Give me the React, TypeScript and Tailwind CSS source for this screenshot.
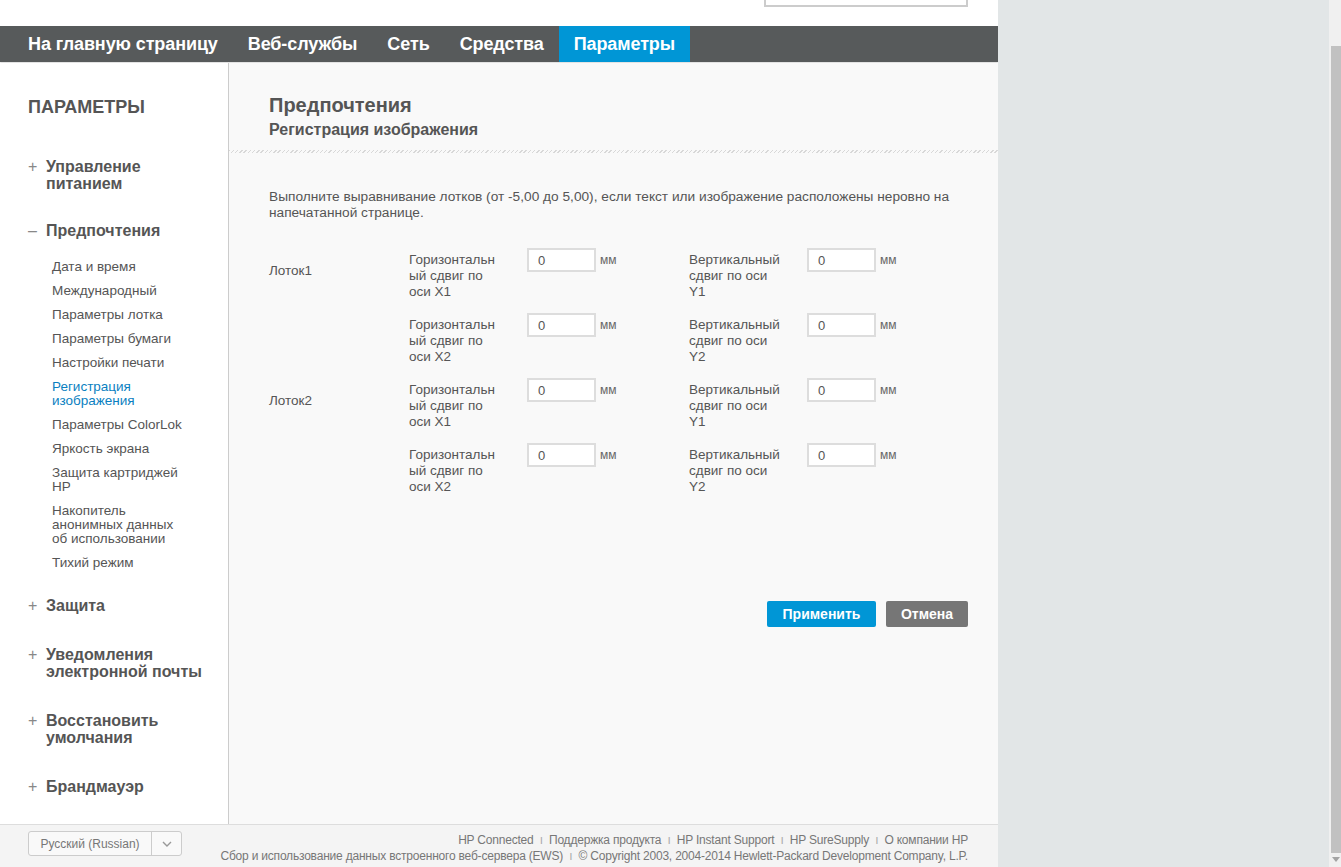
import React from 'react';

const NAV = ['На главную страницу', 'Веб-службы', 'Сеть', 'Средства', 'Параметры'];

const SUB_ITEMS = [
  'Дата и время',
  'Международный',
  'Параметры лотка',
  'Параметры бумаги',
  'Настройки печати',
  'Регистрация изображения',
  'Параметры ColorLok',
  'Яркость экрана',
  'Защита картриджей HP',
  'Накопитель анонимных данных об использовании',
  'Тихий режим',
];

const SECTIONS_AFTER = ['Защита', 'Уведомления электронной почты', 'Восстановить умолчания', 'Брандмауэр'];

interface OffsetRow {
  tray?: string;
  x: string;
  y: string;
}

const ROWS: OffsetRow[] = [
  { tray: 'Лоток1', x: 'X1', y: 'Y1' },
  { x: 'X2', y: 'Y2' },
  { tray: 'Лоток2', x: 'X1', y: 'Y1' },
  { x: 'X2', y: 'Y2' },
];

const SectionHead: React.FC<{ sign: string; title: string }> = ({ sign, title }) => (
  <div className="flex text-[16px] font-bold leading-[16.5px] text-[#555]">
    <span className="w-[18px] shrink-0 font-normal text-[#888]">{sign}</span>
    <span className="w-[160px]">{title}</span>
  </div>
);

const OffsetInput: React.FC = () => (
  <div className="flex items-start">
    <input
      defaultValue="0"
      className="h-[24px] w-[69px] border-2 border-[#ddd] bg-white px-[9px] text-[13px] text-[#555] outline-none"
    />
    <span className="ml-[4px] pt-[4px] text-[12px] text-[#666]">мм</span>
  </div>
);

export default function App() {
  return (
    <div className="flex h-[867px] w-[1341px] overflow-hidden font-['Liberation_Sans',Arial,sans-serif]">
      <div className="flex w-[998px] flex-col">
        {/* header strip with search box */}
        <div className="relative h-[26px] bg-white">
          <div className="absolute left-[764px] top-[-20px] h-[27px] w-[204px] border-2 border-[#ccc] bg-white" />
        </div>

        <nav className="flex h-[36px] bg-[#575a5b] pl-[13px] shadow-[0_2px_2px_rgba(0,0,0,0.12)]">
          {NAV.map((item) => (
            <div
              key={item}
              className={`flex items-center px-[15px] text-[18px] font-bold tracking-[-0.1px] text-white ${
                item === 'Параметры' ? 'bg-[#0096d6]' : ''
              }`}
            >
              {item}
            </div>
          ))}
        </nav>

        <div className="flex flex-1 pt-[1px]">
          {/* left menu */}
          <aside className="w-[229px] shrink-0 border-r border-[#ccc] bg-white pl-[28px] pt-[31px]">
            <div className="mb-[38px] text-[18px] font-bold text-[#555]">ПАРАМЕТРЫ</div>
            <SectionHead sign="+" title="Управление питанием" />
            <div className="mt-[31px]">
              <SectionHead sign="–" title="Предпочтения" />
            </div>
            <ul className="mt-[15px] pl-[24px] text-[13.5px] leading-[14px] text-[#555]">
              {SUB_ITEMS.map((s) => (
                <li
                  key={s}
                  className={`w-[132px] py-[5px] ${s === 'Регистрация изображения' ? 'text-[#0a7fc1]' : ''}`}
                >
                  {s}
                </li>
              ))}
            </ul>
            {SECTIONS_AFTER.map((s, i) => (
              <div key={s} className={i === 0 ? 'mt-[23px]' : 'mt-[33px]'}>
                <SectionHead sign="+" title={s} />
              </div>
            ))}
          </aside>

          {/* main panel */}
          <main className="flex-1 bg-[#f9f9f9]">
            <div className="px-[40px] pt-[30px]">
              <h1 className="text-[20px] font-bold leading-[24px] text-[#555]">Предпочтения</h1>
              <h2 className="mt-[4px] text-[16px] font-bold leading-[18px] text-[#555]">Регистрация изображения</h2>
            </div>
            <div className="mt-[11px] h-[3px] bg-[repeating-linear-gradient(135deg,#d8d8d8_0_1px,transparent_1px_3px)]" />

            <div className="pl-[40px] pr-[30px]">
              <p className="mt-[36px] text-[13.7px] leading-[16px] text-[#555]">
                Выполните выравнивание лотков (от -5,00 до 5,00), если текст или изображение расположены неровно на
                напечатанной странице.
              </p>

              <div className="mt-[27px] flex flex-col gap-[13px]">
                {ROWS.map((r, i) => (
                  <div key={i} className="flex text-[13.5px] leading-[16px] text-[#555]">
                    <div className="w-[140px] shrink-0 pt-[15px]">{r.tray ?? ''}</div>
                    <div className="w-[118px] shrink-0 pt-[4px]">
                      Горизонтальн
                      <br />
                      ый сдвиг по
                      <br />
                      оси {r.x}
                    </div>
                    <div className="w-[162px] shrink-0">
                      <OffsetInput />
                    </div>
                    <div className="w-[118px] shrink-0 pt-[4px]">
                      Вертикальный
                      <br />
                      сдвиг по оси
                      <br />
                      {r.y}
                    </div>
                    <OffsetInput />
                  </div>
                ))}
              </div>

              <div className="mt-[106px] flex justify-end gap-[10px]">
                <button className="h-[26px] w-[109px] rounded-[2px] bg-[#0096d6] text-[14px] font-bold text-white">
                  Применить
                </button>
                <button className="h-[26px] w-[82px] rounded-[2px] bg-[#767676] text-[14px] font-bold text-white">
                  Отмена
                </button>
              </div>
            </div>
          </main>
        </div>

        <footer className="flex h-[43px] items-start border-t border-[#ddd] bg-[#f4f4f4] pl-[28px] pr-[30px] pt-[6px]">
          <div className="flex h-[25px] w-[154px] items-stretch rounded-[3px] border border-[#ccc] bg-[#f9f9f9] text-[12px] text-[#777]">
            <div className="flex flex-1 items-center justify-center border-r border-[#ccc]">Русский (Russian)</div>
            <div className="flex w-[29px] items-center justify-center">
              <svg width="10" height="6" viewBox="0 0 10 6" fill="none" stroke="#999" strokeWidth="1.4">
                <path d="M1 1l4 4 4-4" />
              </svg>
            </div>
          </div>
          <div className="ml-auto mt-[1px] text-right text-[12px] leading-[16px] tracking-[-0.2px] text-[#777]">
            <div>
              HP Connected <span className="px-[3px] text-[#aaa]">ı</span> Поддержка продукта{' '}
              <span className="px-[3px] text-[#aaa]">ı</span> HP Instant Support{' '}
              <span className="px-[3px] text-[#aaa]">ı</span> HP SureSupply{' '}
              <span className="px-[3px] text-[#aaa]">ı</span> О компании HP
            </div>
            <div>
              Сбор и использование данных встроенного веб-сервера (EWS){' '}
              <span className="px-[3px] text-[#aaa]">ı</span> © Copyright 2003, 2004-2014 Hewlett-Packard Development
              Company, L.P.
            </div>
          </div>
        </footer>
      </div>

      <div className="flex-1 bg-[#e2e6e7]" />

      {/* window scrollbar */}
      <div className="flex w-[12px] flex-col bg-[#f0f0f0] pl-[2px]">
        <div className="mt-[46px] h-[807px] w-[10px] bg-[#c1c1c1]" />
        <div className="mt-[4px] flex justify-center">
          <svg width="8" height="5" viewBox="0 0 8 5">
            <path d="M0 0h8L4 5z" fill="#a3a3a3" />
          </svg>
        </div>
      </div>
    </div>
  );
}
